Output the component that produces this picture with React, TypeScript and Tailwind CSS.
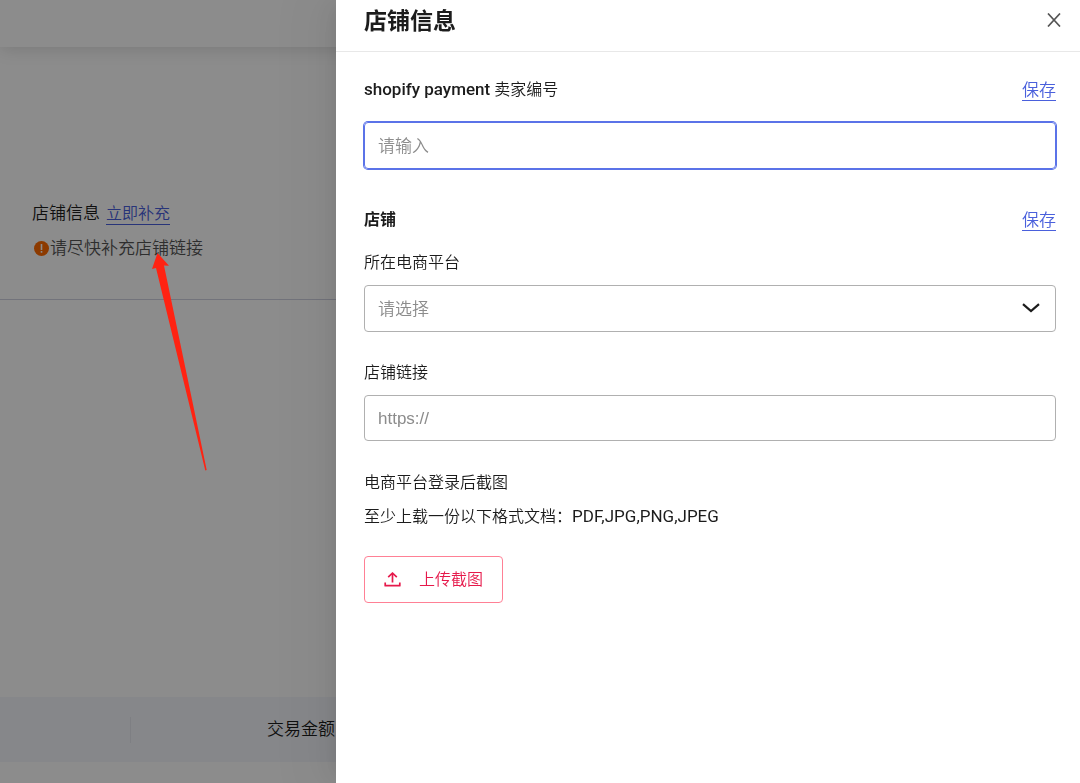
import React from 'react';

interface SectionHeadingProps {
  htmlFor?: string;
  children: React.ReactNode;
}

const SectionHeading: React.FC<SectionHeadingProps> = ({ htmlFor, children }) => (
  <div className="flex h-6 items-center justify-between">
    {htmlFor ? (
      <label htmlFor={htmlFor}>{children}</label>
    ) : (
      <h3 className="font-bold">{children}</h3>
    )}
    <a href="#save" className="border-b border-[#4a60dc] text-[17px] leading-5 text-[#4a60dc]">
      保存
    </a>
  </div>
);

const StorePage: React.FC = () => (
  <main className="min-h-screen bg-white text-[#1c1c1c]">
    <header className="h-[47px] bg-white shadow-[0_2px_18px_rgba(0,0,0,0.14)]" />
    <section className="border-b border-[#d0d2e0] px-8 pt-[155px] pb-[38px]">
      <p className="flex h-6 items-center gap-[6px]">
        <span className="text-[17px]">店铺信息</span>
        <a href="#supplement" className="border-b border-[#4a60dc] leading-5 text-[#4a60dc]">
          立即补充
        </a>
      </p>
      <p className="mt-[10px] flex items-center gap-px pl-[2px] pb-px text-[17px] leading-6 text-[#555]">
        <svg viewBox="0 0 15 15" className="h-[15px] w-[15px]" aria-hidden="true">
          <circle cx="7.5" cy="7.5" r="7.5" fill="#ff6a00" />
          <path d="M7.5 3v6M7.5 10v1.8" stroke="#fff" strokeWidth="1.6" />
        </svg>
        请尽快补充店铺链接
      </p>
    </section>
    <div className="mt-[397px] flex h-[65px] items-center bg-[#f4f6fb]">
      <div className="h-[26px] w-[131px] border-r border-[#e6e7ee]" />
      <div className="pl-[136px] text-[17px]">交易金额</div>
    </div>
  </main>
);

const StoreDrawer: React.FC = () => (
  <aside
    role="dialog"
    aria-labelledby="drawer-title"
    className="fixed inset-y-0 right-0 w-[744px] max-w-full overflow-y-auto bg-white text-[#1c1c1c] shadow-[-6px_0_16px_-8px_rgba(0,0,0,0.08),-9px_0_28px_0_rgba(0,0,0,0.05),-12px_0_48px_16px_rgba(0,0,0,0.03)]"
  >
    <header className="flex items-start justify-between border-b border-[#e8e8e8] pt-[6px] pr-[18px] pb-[13px] pl-7">
      <h2 id="drawer-title" className="text-[23px] font-bold leading-8">
        店铺信息
      </h2>
      <button type="button" aria-label="关闭" className="mt-[6px] p-px">
        <svg viewBox="0 0 14 14" className="h-[14px] w-[14px]" fill="none" stroke="#555" strokeWidth="1.7">
          <path d="M1 0.5l12 13M13 0.5l-12 13" />
        </svg>
      </button>
    </header>

    <form className="pt-[26px] pr-6 pb-7 pl-7 leading-6">
      <SectionHeading htmlFor="seller-id">
        <span className="text-[17px] font-medium leading-5">shopify payment</span> 卖家编号
      </SectionHeading>
      <input
        id="seller-id"
        type="text"
        placeholder="请输入"
        className="mt-5 block h-[47px] w-full rounded border border-[#5b73e8] px-[13px] text-[17px] outline-none ring-1 ring-[#5b73e8] placeholder:text-[#8c8c8c]"
      />

      <div className="mt-[39px]">
        <SectionHeading>店铺</SectionHeading>
      </div>

      <label htmlFor="platform" className="mt-[19px] block">
        所在电商平台
      </label>
      <div className="relative mt-[10px]">
        <select
          id="platform"
          defaultValue=""
          className="block h-[47px] w-full appearance-none rounded border border-[#b0b0b0] bg-white px-[13px] text-[17px] text-[#8c8c8c] outline-none"
        >
          <option value="">请选择</option>
        </select>
        <svg
          viewBox="0 0 18 10"
          className="pointer-events-none absolute top-[18px] right-4 h-[10px] w-[18px]"
          fill="none"
          stroke="#1c1c1c"
          strokeWidth="2.2"
        >
          <path d="M1 1.2l8 6.8 8-6.8" />
        </svg>
      </div>

      <label htmlFor="store-link" className="mt-[29px] block">
        店铺链接
      </label>
      <input
        id="store-link"
        type="url"
        placeholder="https://"
        className="mt-[10px] block h-[46px] w-full rounded border border-[#b0b0b0] px-[13px] pt-px font-['Liberation_Sans',Arial,sans-serif] text-[17px] outline-none placeholder:text-[#8c8c8c]"
      />

      <p className="mt-[30px]">电商平台登录后截图</p>
      <p className="mt-[10px]">
        至少上载一份以下格式文档：<span className="text-[17px] font-normal leading-5">PDF,JPG,PNG,JPEG</span>
      </p>
      <button
        type="button"
        className="mt-[27px] flex h-[47px] items-center gap-[18px] rounded border border-[#ff8095] px-[19px] text-[#e6194b]"
      >
        <svg viewBox="0 0 17 17" className="h-[17px] w-[17px]" fill="none" stroke="currentColor" strokeWidth="1.7" strokeLinejoin="round">
          <path d="M8.5 11.500V2.200M4.200 6.200l4.300-4.200 4.300 4.200M1.200 11.500v3.200h14.600v-3.200" />
        </svg>
        上传截图
      </button>
    </form>
  </aside>
);

// red marker pointing from the drawer edge up to the hint text
const PointerArrow: React.FC = () => (
  <svg
    viewBox="0 0 55 218"
    className="pointer-events-none absolute top-[253px] left-[152px] h-[218px] w-[55px]"
    aria-hidden="true"
  >
    <path d="M5.500 0L17 12.800L12 12.500L54.700 217L53.300 217.500L4 15L0 16Z" fill="#ff2312" />
  </svg>
);

const App: React.FC = () => (
  <div className="relative min-h-screen overflow-hidden font-['Roboto','Noto_Sans_CJK_SC',sans-serif] text-base font-[350]">
    <StorePage />
    <div className="absolute inset-0 bg-black/45" />
    <PointerArrow />
    <StoreDrawer />
  </div>
);

export default App;
